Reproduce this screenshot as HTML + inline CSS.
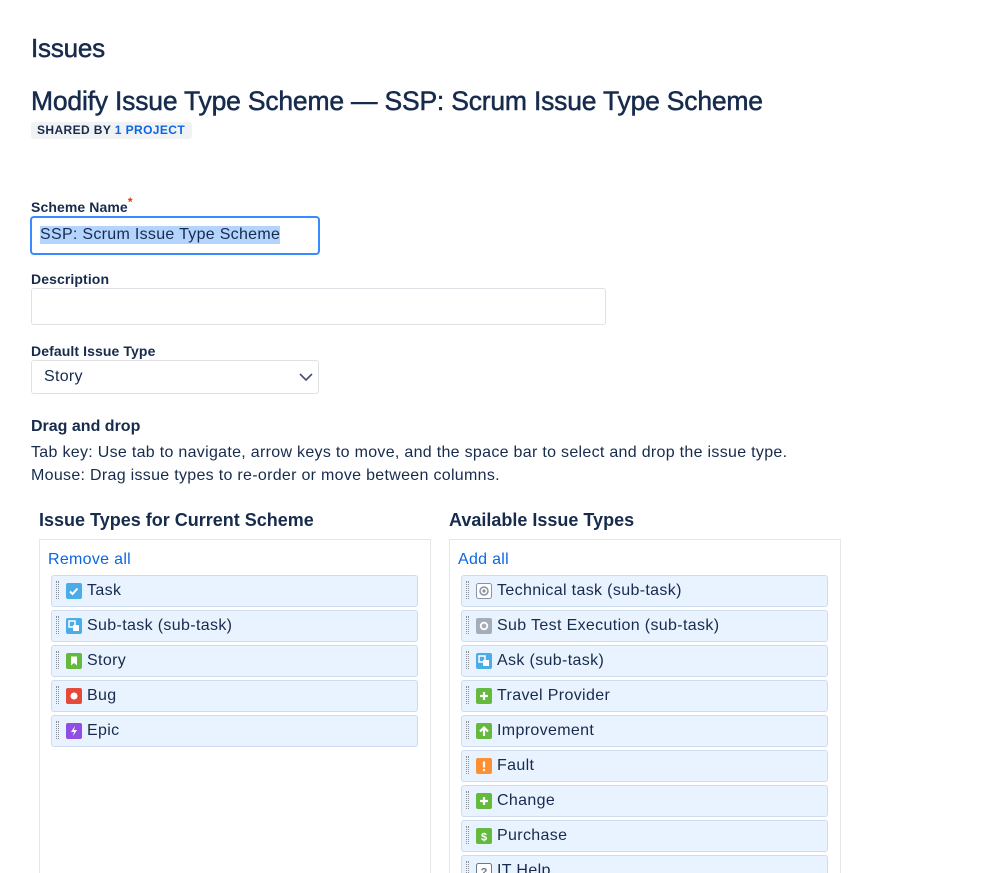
<!DOCTYPE html>
<html><head><meta charset="utf-8">
<style>
*{box-sizing:border-box;margin:0;padding:0}
html,body{width:999px;height:873px;overflow:hidden}
body{background:#fff;font-family:"Liberation Sans",Arial,sans-serif;color:#172b4d;position:relative}
.a{position:absolute;white-space:nowrap}
h1{position:absolute;left:31px;top:33px;font-size:26px;font-weight:normal;letter-spacing:-0.2px;-webkit-text-stroke:0.5px #172b4d}
h2{position:absolute;left:31px;top:86px;font-size:26.5px;font-weight:normal;letter-spacing:-0.2px;-webkit-text-stroke:0.5px #172b4d}
.lozenge{position:absolute;left:31px;top:122px;height:17px;width:161px;background:#f1f2f4;border-radius:3px;font-size:12px;font-weight:bold;padding:1px 6px;letter-spacing:0.4px}
.lozenge span{color:#0c66e4}
.lbl{font-size:14px;font-weight:bold;letter-spacing:0.1px}
.inp{position:absolute;border:1px solid #dfe1e6;border-radius:3px;background:#fff}
.panel{position:absolute;top:539px;width:392px;height:340px;border:1px solid #e4e6ea;border-bottom:none}
.link{position:absolute;left:8px;top:11px;font-size:16px;color:#0c66e4;letter-spacing:0.3px}
.row{position:absolute;left:11px;width:367px;height:32px;background:#e9f2ff;border:1px solid #cfdcef;border-radius:3px}
.grip{position:absolute;left:4px;top:5px;width:3px;height:18px;border-left:1px dotted #8a8f99;border-right:1px dotted #8a8f99}
.ic{position:absolute;left:14px;top:7px;width:16px;height:16px}
.row .t{position:absolute;left:35px;top:6px;font-size:16px;white-space:nowrap;letter-spacing:0.35px}
</style></head><body>
<h1>Issues</h1>
<h2>Modify Issue Type Scheme — SSP: Scrum Issue Type Scheme</h2>
<div class="lozenge">SHARED BY <span>1 PROJECT</span></div>

<div class="a lbl" style="left:31px;top:199px">Scheme Name<span style="color:#de350b;font-size:12px;position:relative;top:-6px">*</span></div>
<div class="inp" style="left:30px;top:216px;width:290px;height:39px;border:2px solid #388bff;border-radius:4px"><span class="a" style="left:8px;top:8px;font-size:16px;background:#b3d4fc;letter-spacing:0.3px">SSP: Scrum Issue Type Scheme</span></div>

<div class="a lbl" style="left:31px;top:271px">Description</div>
<div class="inp" style="left:31px;top:288px;width:575px;height:37px"></div>

<div class="a lbl" style="left:31px;top:343px">Default Issue Type</div>
<div class="inp" style="left:31px;top:360px;width:288px;height:34px"><span class="a" style="left:12px;top:7px;font-size:16px;letter-spacing:0.3px">Story</span>
<svg class="a" style="left:267px;top:10px" width="14" height="12" viewBox="0 0 14 12"><path d="M1 3l6 6 6-6" fill="none" stroke="#42526e" stroke-width="1.6"/></svg></div>

<div class="a" style="left:31px;top:418px;font-size:16px;font-weight:bold">Drag and drop</div>
<div class="a" style="left:31px;top:441px;font-size:16px;line-height:23px;letter-spacing:0.3px">Tab key: Use tab to navigate, arrow keys to move, and the space bar to select and drop the issue type.<br>Mouse: Drag issue types to re-order or move between columns.</div>

<div class="a" style="left:39px;top:510px;font-size:18px;font-weight:bold">Issue Types for Current Scheme</div>
<div class="a" style="left:449px;top:510px;font-size:18px;font-weight:bold">Available Issue Types</div>

<div class="panel" style="left:39px">
<div class="link">Remove all</div>
<div class="row" style="top:35px"><div class="grip"></div><svg class="ic" viewBox="0 0 16 16"><rect width="16" height="16" rx="2" fill="#4bade8"/><path d="M4 8.5l2.5 2.5 5-5.5" fill="none" stroke="#fff" stroke-width="2"/></svg><span class="t">Task</span></div>
<div class="row" style="top:70px"><div class="grip"></div><svg class="ic" viewBox="0 0 16 16"><rect width="16" height="16" rx="2" fill="#4bade8"/><rect x="3" y="3" width="6" height="6" fill="none" stroke="#fff" stroke-width="1.5"/><rect x="7" y="7" width="6" height="6" fill="#fff"/></svg><span class="t">Sub-task (sub-task)</span></div>
<div class="row" style="top:105px"><div class="grip"></div><svg class="ic" viewBox="0 0 16 16"><rect width="16" height="16" rx="2" fill="#63ba3c"/><path d="M5 3.5h6v9l-3-2.5-3 2.5z" fill="#fff"/></svg><span class="t">Story</span></div>
<div class="row" style="top:140px"><div class="grip"></div><svg class="ic" viewBox="0 0 16 16"><rect width="16" height="16" rx="2" fill="#e5493a"/><circle cx="8" cy="8" r="3.5" fill="#fff"/></svg><span class="t">Bug</span></div>
<div class="row" style="top:175px"><div class="grip"></div><svg class="ic" viewBox="0 0 16 16"><rect width="16" height="16" rx="2" fill="#904ee2"/><path d="M9 3L5 9h3l-1 4 4-6H8z" fill="#fff"/></svg><span class="t">Epic</span></div>
</div>

<div class="panel" style="left:449px">
<div class="link">Add all</div>
<div class="row" style="top:35px"><div class="grip"></div><svg class="ic" viewBox="0 0 16 16"><rect x=".5" y=".5" width="15" height="15" rx="2" fill="#fff" stroke="#8993a4"/><circle cx="8" cy="8" r="4" fill="none" stroke="#8993a4" stroke-width="1.5"/><circle cx="8" cy="8" r="1.6" fill="#8993a4"/></svg><span class="t">Technical task (sub-task)</span></div>
<div class="row" style="top:70px"><div class="grip"></div><svg class="ic" viewBox="0 0 16 16"><rect width="16" height="16" rx="2" fill="#a5adba"/><circle cx="8" cy="8" r="3.3" fill="none" stroke="#fff" stroke-width="1.8"/></svg><span class="t">Sub Test Execution (sub-task)</span></div>
<div class="row" style="top:105px"><div class="grip"></div><svg class="ic" viewBox="0 0 16 16"><rect width="16" height="16" rx="2" fill="#4bade8"/><rect x="3" y="3" width="6" height="6" fill="none" stroke="#fff" stroke-width="1.5"/><rect x="7" y="7" width="6" height="6" fill="#fff"/></svg><span class="t">Ask (sub-task)</span></div>
<div class="row" style="top:140px"><div class="grip"></div><svg class="ic" viewBox="0 0 16 16"><rect width="16" height="16" rx="2" fill="#63ba3c"/><path d="M8 4v8M4 8h8" stroke="#fff" stroke-width="2.2"/></svg><span class="t">Travel Provider</span></div>
<div class="row" style="top:175px"><div class="grip"></div><svg class="ic" viewBox="0 0 16 16"><rect width="16" height="16" rx="2" fill="#63ba3c"/><path d="M8 13V5M4 8.5L8 4.5l4 4" fill="none" stroke="#fff" stroke-width="2.2"/></svg><span class="t">Improvement</span></div>
<div class="row" style="top:210px"><div class="grip"></div><svg class="ic" viewBox="0 0 16 16"><rect width="16" height="16" rx="2" fill="#ff8f33"/><path d="M8 3.5v6" stroke="#fff" stroke-width="2.2"/><circle cx="8" cy="12" r="1.2" fill="#fff"/></svg><span class="t">Fault</span></div>
<div class="row" style="top:245px"><div class="grip"></div><svg class="ic" viewBox="0 0 16 16"><rect width="16" height="16" rx="2" fill="#63ba3c"/><path d="M8 4v8M4 8h8" stroke="#fff" stroke-width="2.2"/></svg><span class="t">Change</span></div>
<div class="row" style="top:280px"><div class="grip"></div><svg class="ic" viewBox="0 0 16 16"><rect width="16" height="16" rx="2" fill="#63ba3c"/><text x="8" y="12.5" font-size="11" font-weight="bold" fill="#fff" text-anchor="middle" font-family="Liberation Sans">$</text></svg><span class="t">Purchase</span></div>
<div class="row" style="top:315px"><div class="grip"></div><svg class="ic" viewBox="0 0 16 16"><rect x=".5" y=".5" width="15" height="15" rx="2" fill="#fff" stroke="#6b778c"/><text x="8" y="12.5" font-size="11" font-weight="bold" fill="#6b778c" text-anchor="middle" font-family="Liberation Sans">?</text></svg><span class="t">IT Help</span></div>
</div>
</body></html>
